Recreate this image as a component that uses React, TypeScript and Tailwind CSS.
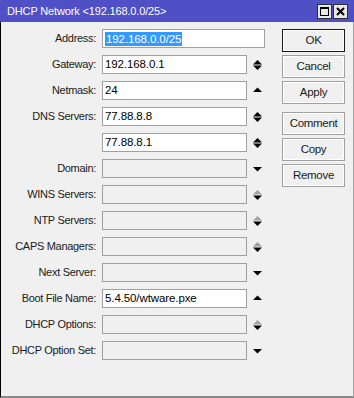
import React from "react";

type Arrow = "both" | "up" | "down" | "greyup" | "none";

const rows: { label: string; value?: string; arrow: Arrow; wide?: boolean; selected?: boolean }[] = [
  { label: "Address:", value: "192.168.0.0/25", arrow: "none", wide: true, selected: true },
  { label: "Gateway:", value: "192.168.0.1", arrow: "both" },
  { label: "Netmask:", value: "24", arrow: "up" },
  { label: "DNS Servers:", value: "77.88.8.8", arrow: "both" },
  { label: "", value: "77.88.8.1", arrow: "both" },
  { label: "Domain:", arrow: "down" },
  { label: "WINS Servers:", arrow: "greyup" },
  { label: "NTP Servers:", arrow: "greyup" },
  { label: "CAPS Managers:", arrow: "greyup" },
  { label: "Next Server:", arrow: "down" },
  { label: "Boot File Name:", value: "5.4.50/wtware.pxe", arrow: "up" },
  { label: "DHCP Options:", arrow: "greyup" },
  { label: "DHCP Option Set:", arrow: "down" },
];

function ArrowIcon({ kind }: { kind: Arrow }) {
  if (kind === "none") return null;
  if (kind === "up")
    return (
      <svg width="9" height="10" viewBox="0 0 9 10">
        <polygon points="0,6 4.5,1.5 9,6" fill="#000" />
      </svg>
    );
  if (kind === "down")
    return (
      <svg width="9" height="10" viewBox="0 0 9 10">
        <polygon points="0,3 4.5,7.5 9,3" fill="#000" />
      </svg>
    );
  return (
    <svg width="9" height="10" viewBox="0 0 9 10">
      <polygon points="0,4.5 4.5,0 9,4.5" fill={kind === "greyup" ? "#a0a0a0" : "#000"} />
      <polygon points="0,5.5 4.5,10 9,5.5" fill="#000" />
    </svg>
  );
}

function Btn({ children, def }: { children: React.ReactNode; def?: boolean }) {
  return (
    <div
      className={
        "h-[23px] w-[63px] flex items-center justify-center bg-[#f0f0f0] text-[#1a1a1a] text-[11.5px] shadow-[inset_0_0_0_1px_#ffffff] " +
        (def ? "border border-[#1a1a1a]" : "border border-[#a0a0a0]")
      }
    >
      {children}
    </div>
  );
}

export default function App() {
  return (
    <div
      className="w-[354px] h-[398px] flex flex-col bg-[#f0f0f0] text-[11px] tracking-[-0.3px]"
      style={{ fontFamily: '"Liberation Sans", Arial, sans-serif' }}
    >
      <div className="h-[22px] bg-[#4f50c6] flex items-center justify-between pl-[7px] pr-[6px] shrink-0">
        <span className="text-white text-[11px] tracking-[-0.15px]">DHCP Network &lt;192.168.0.0/25&gt;</span>
        <div className="flex gap-[1px]">
          <div className="w-[15px] h-[15px] bg-[#e8e8e8] border border-[#303030] flex items-center justify-center">
            <div className="w-[9px] h-[9px] border border-[#000] border-t-2"></div>
          </div>
          <div className="w-[15px] h-[15px] bg-[#e8e8e8] border border-[#303030] flex items-center justify-center">
            <svg width="9" height="9" viewBox="0 0 9 9">
              <path d="M1 1 L8 8 M8 1 L1 8" stroke="#000" strokeWidth="2" />
            </svg>
          </div>
        </div>
      </div>
      <div className="flex-1 flex border-l border-l-[#000] border-r border-r-[#a0a0a0] border-b-2 border-b-[#8a8a8a]">
        <div className="flex flex-col gap-[7px] pt-[7px]">
          {rows.map((r, i) => (
            <div key={i} className="flex items-center h-[19px]">
              <div className="w-[95px] text-right text-[#1a1a1a]">{r.label}</div>
              <div
                className={
                  "ml-[6px] h-[19px] border border-[#a0a0a0] flex items-center pl-[2px] text-[#000] text-[11.5px] tracking-[-0.1px] " +
                  (r.wide ? "w-[163px] " : "w-[145px] ") +
                  (r.value !== undefined ? "bg-white" : "bg-[#f0f0f0]")
                }
              >
                {r.value !== undefined &&
                  (r.selected ? (
                    <span className="bg-[#3399ff] text-white px-[1px] leading-[14px]">{r.value}</span>
                  ) : (
                    <span>{r.value}</span>
                  ))}
              </div>
              {!r.wide && (
                <div className="ml-[6px] w-[9px] h-[19px] flex items-center">
                  <ArrowIcon kind={r.arrow} />
                </div>
              )}
            </div>
          ))}
        </div>
        <div className="ml-auto mr-[8px] pt-[7px] flex flex-col">
          <div className="flex flex-col gap-[3px]">
            <Btn def>OK</Btn>
            <Btn>Cancel</Btn>
            <Btn>Apply</Btn>
          </div>
          <div className="flex flex-col gap-[3px] mt-[8px]">
            <Btn>Comment</Btn>
            <Btn>Copy</Btn>
            <Btn>Remove</Btn>
          </div>
        </div>
      </div>
    </div>
  );
}
